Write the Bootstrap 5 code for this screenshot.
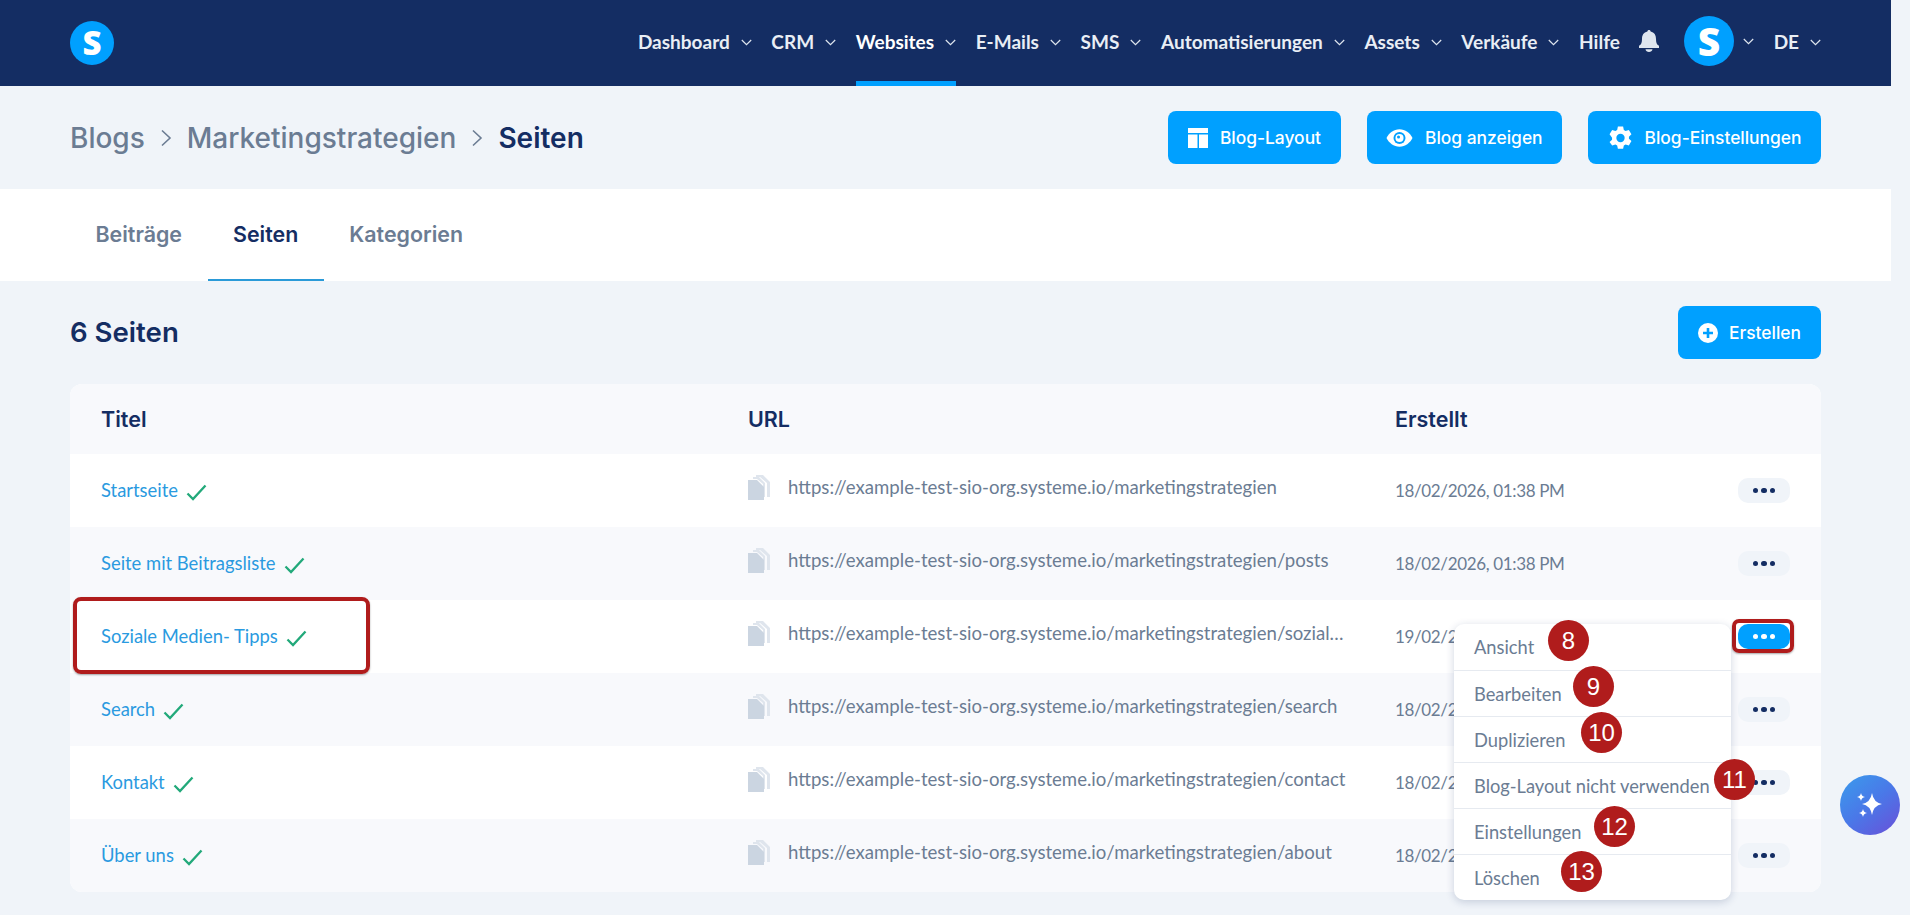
<!DOCTYPE html>
<html lang="de">
<head>
  <meta charset="UTF-8">
  <meta name="viewport" content="width=device-width, initial-scale=1.0">
  <title>Seiten</title>
  <link href="https://cdn.jsdelivr.net/npm/bootstrap@5.3.0/dist/css/bootstrap.min.css" rel="stylesheet">
  <style>
    html, body { height: 100%; overflow: hidden; }
    body { background: #f0f4f9; font-family: "Lato", "Liberation Sans", sans-serif; color: #142d63; }
    .page-wrap { width: 1891px; }
    .top-bar { background: #142d63; height: 86px; padding: 0 70px; }
    .brand-dot { width: 44px; height: 44px; border-radius: 50%; background: #00a0ff; color: #fff; font: 800 33px/44px "Open Sans", sans-serif; text-align: center; }
    .nav-row { gap: 19.6px; height: 86px; }
    .nav-entry { height: 86px; padding-bottom: 2px; display: flex; align-items: center; gap: 11px; color: #e9eef5; font-size: 19px; font-weight: 700; text-decoration: none; position: relative; }
    .nav-entry.on { color: #fff; }
    .nav-entry.on::after { content: ""; position: absolute; left: 0; right: 0; bottom: 0; height: 5px; background: #00a0ff; }
    .nav-caret { width: 11px; height: 7px; flex: none; }
    .bell-ico { margin: 0 5px 4px 0; }
    .avatar-link { gap: 9px; padding-bottom: 4px; }
    .avatar-dot { width: 50px; height: 50px; border-radius: 50%; background: #00a0ff; color: #fff; font: 800 39px/50px "Open Sans", sans-serif; text-align: center; }
    .sub-head { height: 103px; padding: 0 70px; }
    .crumbs { font-family: "Inter", sans-serif; font-weight: 500; font-size: 28px; color: #6b7c93; gap: 15px; }
    .crumbs b { font-weight: 600; color: #142d63; }
    .crumb-sep { width: 12px; height: 20px; }
    .blue-btn { background: #00a0ff; border: 0; color: #fff; border-radius: 8px; height: 53px; padding: 0 19.5px; font: 500 17.4px "Inter", sans-serif; gap: 12px; }
    .blue-btn:hover { background: #00a0ff; color: #fff; }
    .head-btns { gap: 26px; }
    .tab-strip { background: #fff; height: 92px; padding: 0 70px; }
    .tab-strip .nav-link { height: 92px; padding: 0 25.5px; display: flex; align-items: center; font: 600 21.4px "Inter", sans-serif; color: #6b7c93; border-bottom: 2px solid transparent; }
    .tab-strip .nav-link.active { color: #142d63; border-bottom-color: #2a9ad8; }
    .content-area { padding: 25px 70px 0; }
    .sec-title { font: 600 27.6px "Inter", sans-serif; color: #142d63; margin: 0 0 2px; }
    .add-btn { width: 143px; padding: 0 20px; gap: 11px; }
    .pages-box { margin-top: 25px; background: #fff; border-radius: 12px; }
    .pages-tbl { table-layout: fixed; width: 1751px; margin: 0; }
    .pages-tbl th, .pages-tbl td { border: 0; padding: 0 31px; vertical-align: middle; }
    .pages-tbl th { height: 70px; background: #f8f9fc; font: 600 21.5px "Inter", sans-serif; color: #142d63; }
    .pages-tbl th:first-child { border-top-left-radius: 12px; }
    .pages-tbl th:last-child { border-top-right-radius: 12px; }
    .pages-tbl td { height: 73px; background: #fff; font-size: 18.4px; color: #6b7c93; }
    .pages-tbl td.url-cell { padding-right: 17px; }
    .pages-tbl tbody tr:nth-child(even) td { background: #f8f9fc; }
    .pages-tbl tbody tr:last-child td:first-child { border-bottom-left-radius: 12px; }
    .pages-tbl tbody tr:last-child td:last-child { border-bottom-right-radius: 12px; }
    .title-link { color: #2a9ae0; text-decoration: none; font-size: 18.4px; }
    .ok-mark { width: 21px; height: 17px; margin-left: 8px; }
    .url-line { gap: 18px; padding-bottom: 5px; }
    .url-text { overflow: hidden; white-space: nowrap; text-overflow: ellipsis; width: 559px; flex: none; font-size: 18.6px; }
    .copy-ico { width: 22px; height: 25px; flex: none; }
    .date-text { font-size: 17px; letter-spacing: -.35px; }
    .dots-btn { width: 52px; height: 25px; background: #f0f4f9; border: 0; border-radius: 10px; padding: 0; gap: 3px; }
    .dots-btn i { width: 5.5px; height: 5.5px; border-radius: 50%; background: #142d63; display: block; }
    .dots-btn.open { background: #00a0ff; }
    .dots-btn.open i { background: #fff; }
    .row-menu-anchor { position: relative; display: inline-flex; vertical-align: middle; margin-bottom: 2px; }
    .red-frame { position: absolute; border: 4px solid #b01c1c; border-radius: 8px; pointer-events: none; box-shadow: 0 1px 2px rgba(0,0,0,.35); }
    .frame-title { left: -28px; top: -26px; width: 297px; height: 77px; }
    .frame-btn { left: -6px; top: -5px; width: 62px; height: 34px; border-radius: 7px; }
    .title-cell-in { position: relative; display: inline-block; }
    .pop-menu { position: absolute; top: 0; right: calc(100% + 7px); width: 277px; padding: 0; margin: 0; border: 0; border-radius: 10px; box-shadow: 0 2px 8px rgba(20,45,99,.2); display: block; min-width: 0; }
    .pop-menu li { border-top: 1px solid #e6eaf0; }
    .pop-menu li:first-child { border-top: 0; }
    .pop-menu .dropdown-item { height: 45px; padding: 2px 20px 0; display: flex; align-items: center; font-size: 18.3px; color: #6b7c93; }
    .pop-menu li:first-child .dropdown-item { height: 46px; }
    .pop-menu .dropdown-item:hover { background: transparent; }
    .num-pin { position: absolute; width: 41px; height: 41px; border-radius: 50%; background: #b01c1c; color: #fff; font: 400 24px/41px "Liberation Sans", sans-serif; text-align: center; }
    .pin-8 { left: 94px; top: -4px; }
    .pin-9 { left: 119px; top: 42px; }
    .pin-10 { left: 127px; top: 88px; }
    .pin-11 { left: 260px; top: 135px; }
    .pin-12 { left: 140px; top: 182px; }
    .pin-13 { left: 107px; top: 227px; }
    .ai-fab { position: fixed; left: 1840px; top: 775px; width: 60px; height: 60px; border-radius: 50%; border: 0; padding: 0; background: linear-gradient(140deg, #3a9cec 0%, #4a78e8 50%, #6a4fd8 100%); }
  </style>
  <script src="https://cdn.jsdelivr.net/npm/bootstrap@5.3.0/dist/js/bootstrap.bundle.min.js"></script>
</head>
<body>
<div class="page-wrap">
  <header class="top-bar d-flex align-items-center justify-content-between">
    <div class="brand-dot">S</div>
    <nav class="nav-row d-flex align-items-center" id="mainNav"></nav>
  </header>

  <div class="sub-head d-flex align-items-center justify-content-between">
    <div class="crumbs d-flex align-items-center">
      <span>Blogs</span>
      <svg class="crumb-sep" viewBox="0 0 12 20" fill="none" stroke="#6b7c93" stroke-width="1.600"><path d="M2 2.500l8 7.500-8 7.500"/></svg>
      <span>Marketingstrategien</span>
      <svg class="crumb-sep" viewBox="0 0 12 20" fill="none" stroke="#6b7c93" stroke-width="1.600"><path d="M2 2.500l8 7.500-8 7.500"/></svg>
      <b>Seiten</b>
    </div>
    <div class="head-btns d-flex">
      <button class="btn blue-btn d-flex align-items-center">
        <svg width="20" height="20" viewBox="0 0 20 20" fill="#fff"><path d="M0 0h20v5H0zM0 6.500h9.500V20H0zM11 6.500h9V20h-9z"/></svg>
        Blog-Layout
      </button>
      <button class="btn blue-btn d-flex align-items-center">
        <svg width="27" height="20" viewBox="0 0 28 20"><path fill="#fff" d="M14 1C8 1 3 5 .5 10 3 15 8 19 14 19s11-4 13.500-9C25 5 20 1 14 1z"/><circle cx="14" cy="10" r="6.200" fill="#00a0ff"/><circle cx="14" cy="10" r="4.200" fill="#fff"/><circle cx="13" cy="9" r="1.600" fill="#00a0ff"/></svg>
        Blog anzeigen
      </button>
      <button class="btn blue-btn d-flex align-items-center">
        <svg width="25" height="26" viewBox="0 0 24 24"><path fill="#fff" fill-rule="evenodd" d="M9.500 1h5l.7 3.200 1.700 1 3.100-1 2.500 4.300-2.400 2.200v2l2.400 2.200-2.500 4.300-3.100-1-1.700 1-.7 3.200h-5l-.7-3.200-1.700-1-3.100 1L1.500 15.900l2.400-2.200v-2L1.500 8.500 4 4.200l3.100 1 1.700-1zM12 8a4 4 0 100 8 4 4 0 000-8z"/></svg>
        Blog-Einstellungen
      </button>
    </div>
  </div>

  <ul class="nav tab-strip">
    <li class="nav-item"><a class="nav-link" href="#">Beiträge</a></li>
    <li class="nav-item"><a class="nav-link active" href="#">Seiten</a></li>
    <li class="nav-item"><a class="nav-link" href="#">Kategorien</a></li>
  </ul>

  <main class="content-area">
    <div class="d-flex align-items-center justify-content-between">
      <h2 class="sec-title">6 Seiten</h2>
      <button class="btn blue-btn add-btn d-flex align-items-center">
        <svg width="20" height="20" viewBox="0 0 20 20"><circle cx="10" cy="10" r="10" fill="#fff"/><path d="M10 5v10M5 10h10" stroke="#00a0ff" stroke-width="2.600"/></svg>
        Erstellen
      </button>
    </div>
    <div class="pages-box">
      <table class="table pages-tbl">
        <colgroup><col style="width:647px"><col style="width:647px"><col style="width:300px"><col></colgroup>
        <thead><tr><th>Titel</th><th>URL</th><th>Erstellt</th><th></th></tr></thead>
        <tbody id="pageRows"></tbody>
      </table>
    </div>
  </main>
</div>

<button class="ai-fab" aria-label="KI">
  <svg width="60" height="60" viewBox="0 0 60 60" fill="#fff"><path d="M32 18Q33.500 27.500 42 29 33.500 30.500 32 40 30.500 30.500 22 29 30.500 27.500 32 18z"/><path d="M21 18Q21.600 21.400 25 22 21.600 22.600 21 26 20.400 22.600 17 22 20.400 21.400 21 18zM23 34Q23.600 37.400 27 38 23.600 38.600 23 42 22.400 38.600 19 38 22.400 37.400 23 34z"/></svg>
</button>

<script>
// top navigation
const caret = '<svg class="nav-caret" viewBox="0 0 11 7" fill="none" stroke="#dfe6ef" stroke-width="1.200"><path d="M.8 1l4.700 4.700L10.200 1"/></svg>';
const navItems = [
  ['Dashboard', 1], ['CRM', 1], ['Websites', 1, 'on'], ['E-Mails', 1], ['SMS', 1],
  ['Automatisierungen', 1], ['Assets', 1], ['Verkäufe', 1], ['Hilfe', 0]
];
let navHtml = navItems.map(n => `<a class="nav-entry ${n[2] || ''}" href="#">${n[0]}${n[1] ? caret : ''}</a>`).join('');
navHtml += '<svg class="bell-ico" width="20" height="22" viewBox="0 0 20 22" fill="#dfe6ef"><path d="M10 0c.9 0 1.500.6 1.600 1.400C15.300 2.200 17 5 17 9c0 3.500.6 5.400 3 6.800V18H0v-2.200C2.400 14.400 3 12.500 3 9c0-4 1.700-6.800 5.400-7.600C8.500.6 9.100 0 10 0zM6.500 19.200h7c-.3 1.700-1.700 2.800-3.500 2.800s-3.200-1.100-3.500-2.800z"/></svg>';
navHtml += `<a class="nav-entry avatar-link" href="#"><span class="avatar-dot">S</span>${caret}</a>`;
navHtml += `<a class="nav-entry" href="#">DE${caret}</a>`;
document.getElementById('mainNav').innerHTML = navHtml;

// table rows
const base = 'https://example-test-sio-org.systeme.io/marketingstrategien';
const pages = [
  ['Startseite', '', '18/02/2026, 01:38 PM'],
  ['Seite mit Beitragsliste', '/posts', '18/02/2026, 01:38 PM'],
  ['Soziale Medien- Tipps', '/soziale-medien-tipps', '19/02/2026, 09:12 AM'],
  ['Search', '/search', '18/02/2026, 01:38 PM'],
  ['Kontakt', '/contact', '18/02/2026, 01:38 PM'],
  ['Über uns', '/about', '18/02/2026, 01:38 PM']
];
const labels = ['Ansicht', 'Bearbeiten', 'Duplizieren', 'Blog-Layout nicht verwenden', 'Einstellungen', 'Löschen'];
const okMark = '<svg class="ok-mark" viewBox="0 0 21 17" fill="none" stroke="#22a97a" stroke-width="2.300"><path d="M1.500 9.500l5.500 5.500L19.500 1.500"/></svg>';
const copyIco = '<svg class="copy-ico" viewBox="0 0 22 25"><path fill="#dfe5ed" d="M8 0h7l7 7v15h-3V8l-7-6H8z"/><path fill="#dfe5ed" d="M5 2h6l6 6v14h-2V9l-6-5H5z"/><path fill="#cbd5e1" d="M0 5h9l7 7v13H0z"/></svg>';
const menu = '<ul class="dropdown-menu pop-menu">' + labels.map((l, i) =>
  `<li><a class="dropdown-item" href="#">${l}</a><span class="num-pin pin-${i + 8}">${i + 8}</span></li>`).join('') + '</ul>';
document.getElementById('pageRows').innerHTML = pages.map((p, i) => {
  const open = i === 2;
  return `<tr>
    <td><span class="title-cell-in"><a class="title-link" href="#">${p[0]}</a>${okMark}${open ? '<span class="red-frame frame-title"></span>' : ''}</span></td>
    <td class="url-cell"><div class="url-line d-flex align-items-center">${copyIco}<span class="url-text">${base + p[1]}</span></div></td>
    <td><span class="date-text">${p[2]}</span></td>
    <td class="text-end"><span class="row-menu-anchor"><button class="btn dots-btn d-flex align-items-center justify-content-center ${open ? 'open' : ''}"><i></i><i></i><i></i></button>${open ? '<span class="red-frame frame-btn"></span>' + menu : ''}</span></td>
  </tr>`;
}).join('');
</script>
</body>
</html>
